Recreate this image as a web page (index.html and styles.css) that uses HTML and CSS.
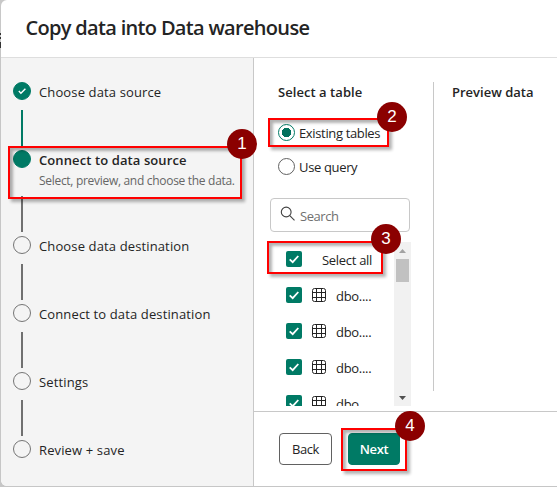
FILE: index.html
```
<!DOCTYPE html>
<html lang="en">
<head>
<meta charset="utf-8">
<title>Copy data into Data warehouse</title>
<link rel="stylesheet" href="styles.css">
</head>
<body>
<svg class="defs" width="0" height="0">
  <symbol id="check" viewBox="0 0 16 16"><path d="M3.7 8.4 6.7 11.2 12.3 5" fill="none" stroke="#fff" stroke-width="1.8"/></symbol>
  <symbol id="table" viewBox="0 0 14 14"><rect x=".5" y=".5" width="13" height="13" rx="2"/><path d="M4.5 .5v13M9.5 .5v13M.5 4.5h13M.5 9.5h13"/></symbol>
</svg>
<div class="dialog">
  <header class="header"><h1>Copy data into Data warehouse</h1></header>
  <div class="body">
    <ol class="steps">
      <li class="step done"><span class="dot"><svg width="16" height="16"><path d="M4.8 8.1 6.9 10.2 11.4 5.7" fill="none" stroke="#fff" stroke-width="1.4"/></svg></span><div class="label"><span>Choose data source</span></div></li>
      <li class="step current"><span class="dot"></span><div class="label"><b>Connect to data source</b><small>Select, preview, and choose the data.</small></div></li>
      <li class="step"><span class="dot"></span><div class="label"><span>Choose data destination</span></div></li>
      <li class="step"><span class="dot"></span><div class="label"><span>Connect to data destination</span></div></li>
      <li class="step"><span class="dot"></span><div class="label"><span>Settings</span></div></li>
      <li class="step"><span class="dot"></span><div class="label"><span>Review + save</span></div></li>
    </ol>
    <main class="main">
      <div class="content">
        <section class="picker">
          <h2>Select a table</h2>
          <div class="radio first"><i class="on"></i><span>Existing tables</span></div>
          <div class="radio"><i></i><span>Use query</span></div>
          <div class="search"><svg width="16" height="16"><g fill="none" stroke="#424242" stroke-width="1.1"><circle cx="6.2" cy="6" r="4.9"/><path d="m9.8 9.6 4.7 4.7"/></g></svg><span>Search</span></div>
          <div class="list">
            <div class="rows">
              <div class="row all"><span class="cb"><svg width="16" height="16"><use href="#check"/></svg></span><span class="name">Select all</span></div>
              <div class="row"><span class="cb"><svg width="16" height="16"><use href="#check"/></svg></span><svg class="tbl" width="14" height="14"><use href="#table"/></svg><span class="dbo">dbo....</span></div>
              <div class="row"><span class="cb"><svg width="16" height="16"><use href="#check"/></svg></span><svg class="tbl" width="14" height="14"><use href="#table"/></svg><span class="dbo">dbo....</span></div>
              <div class="row"><span class="cb"><svg width="16" height="16"><use href="#check"/></svg></span><svg class="tbl" width="14" height="14"><use href="#table"/></svg><span class="dbo">dbo....</span></div>
              <div class="row"><span class="cb"><svg width="16" height="16"><use href="#check"/></svg></span><svg class="tbl" width="14" height="14"><use href="#table"/></svg><span class="dbo">dbo....</span></div>
            </div>
            <div class="scroll"><svg width="17" height="17"><path d="M5 11 8.5 7 12 11z" fill="#a3a3a3"/></svg><div class="thumb"></div><svg class="down" width="17" height="17"><path d="M5 7 8.5 11 12 7z" fill="#505050"/></svg></div>
          </div>
        </section>
        <section class="preview"><h2>Preview data</h2></section>
      </div>
      <footer class="footer"><button class="back"><span>Back</span></button><button class="next"><span>Next</span></button></footer>
    </main>
  </div>
</div>
<div class="mark m1"><b>1</b></div>
<div class="mark m2"><b>2</b></div>
<div class="mark m3"><b>3</b></div>
<div class="mark m4"><b>4</b></div>
</body>
</html>
```
FILE: styles.css
```
* { box-sizing: border-box; }
body { margin: 0; width: 557px; height: 487px; overflow: hidden; background: linear-gradient(#c8c8c8 33px, #333 33px 35px, #c8c8c8 35px 37px, #333 37px 39px, #c8c8c8 39px 42px, #333 42px 48px, #c6c6c6 48px); font: 13px/20px "Open Sans", "Noto Sans", sans-serif; color: #242424; }
.defs { position: absolute; }
.dialog { margin-left: 1px; height: 486px; background: #fff; border-radius: 6px 0 0 6px; overflow: hidden; display: flex; flex-direction: column; }
.header { height: 58px; border-bottom: 1px solid #dedede; padding: 14px 0 0 24.5px; flex: none; }
h1 { margin: 0; font-size: 20px; line-height: 28px; font-weight: 600; white-space: nowrap; letter-spacing: -.68px; }
h2 { margin: 0; font-size: 13px; line-height: 20px; font-weight: 600; white-space: nowrap; letter-spacing: .05px; }
.body { flex: 1; display: flex; min-height: 0; }
.steps { list-style: none; margin: 0; width: 253px; flex: none; padding: 24px 0 0 12px; background: #f4f4f4; border-right: 1px solid #c8c8c8; letter-spacing: .13px; }
.step { display: grid; grid-template-columns: 18px 1fr; grid-template-rows: 18px 1fr; column-gap: 8px; height: 68px; white-space: nowrap; }
.step.current { height: 86px; }
.dot { width: 18px; height: 18px; border-radius: 50%; border: 1px solid #757575; display: flex; }
.done .dot, .current .dot { background: #007a65; border-color: #007a65; }
.step::after { content: ""; grid-column: 1; grid-row: 2; width: 2px; height: 36px; background: #707070; align-self: end; margin: 0 0 4px 8px; }
.step.done::after { background: #007a65; }
.step:last-child::after { display: none; }
.label { grid-column: 2; grid-row: 1 / 3; display: flex; flex-direction: column; }
.label b { font-weight: 600; letter-spacing: .1px; }
.label small { font-size: 12px; line-height: 18px; margin-top: 2px; color: #666; letter-spacing: -.3px; }
.main { flex: 1; display: flex; flex-direction: column; min-width: 0; }
.content { flex: 1; display: flex; }
.picker { width: 179px; padding: 24px 22px 0 16px; flex: none; }
.picker h2 { margin-left: 8px; }
.radio { height: 17px; margin: 17px 0 0 8px; display: flex; align-items: center; gap: 4px; white-space: nowrap; letter-spacing: -.35px; }
.radio.first { margin-top: 22px; }
.radio i { width: 17px; height: 17px; border: 1px solid #616161; border-radius: 50%; }
.radio .on { border-color: #007a65; background: radial-gradient(circle, #00705c 0 4.5px, transparent 5px); }
.search { margin-top: 23px; width: 140px; height: 34px; border: 1px solid #c8c8c8; border-radius: 4px; padding-left: 9px; display: flex; align-items: center; gap: 4px; color: #707070; letter-spacing: -.45px; }
.search svg { margin-top: -2px; }
.search span { margin-top: 2px; }
.list { margin-top: 10px; width: 141px; height: 164px; display: flex; overflow: hidden; }
.rows { width: 124px; padding-left: 16px; }
.row { height: 36px; display: flex; align-items: center; white-space: nowrap; letter-spacing: -.3px; }
.row.all { height: 35px; padding-bottom: 1px; }
.name { margin: 2px 0 0 20px; }
.cb { width: 16px; height: 16px; border-radius: 2px; background: #007a65; display: flex; flex: none; }
.tbl { margin: 0 10px; fill: none; stroke: #242424; flex: none; }
.dbo { margin-top: 2px; }
.scroll { width: 17px; background: #f1f1f1; display: flex; flex-direction: column; align-items: center; }
.thumb { width: 13px; height: 23px; background: #c1c1c1; }
.down { margin-top: auto; }
.preview { margin: 24px 0 20px; padding-left: 18px; border-left: 1px solid #c8c8c8; flex: 1; }
.preview h2 { letter-spacing: 0; }
.footer { height: 75px; flex: none; border-top: 1px solid #c8c8c8; padding: 21px 0 0 25px; display: flex; gap: 16px; }
button { width: 53px; height: 32px; padding: 0; border: 1px solid #616161; border-radius: 4px; background: #fff; color: #242424; font: 13px/20px "Open Sans", sans-serif; letter-spacing: -.4px; }
button.next { width: 52px; background: #007a65; border-color: #007a65; color: #fff; font-weight: 600; letter-spacing: -.4px; }
.mark { position: absolute; border: 2px solid #f00; box-shadow: 3px 3px 3px rgba(0,0,0,.3), inset 3px 3px 3px rgba(0,0,0,.3); }
.mark b { position: absolute; width: 30px; height: 30px; border-radius: 50%; background: #8b0000; color: #fff; font: 17px/29px "Liberation Sans", sans-serif; text-align: center; }
.m1 { left: 8px; top: 146px; width: 234px; height: 53px; }
.m2 { left: 268px; top: 118px; width: 121px; height: 29px; }
.m3 { left: 267px; top: 241px; width: 116px; height: 33px; }
.m4 { left: 341px; top: 428px; width: 66px; height: 43px; }
.m1 b { right: -17px; top: -19px; }
.m2 b { right: -20px; top: -18px; }
.m3 b { right: -20px; top: -19px; }
.m4 b { right: -20px; top: -19px; }
```
